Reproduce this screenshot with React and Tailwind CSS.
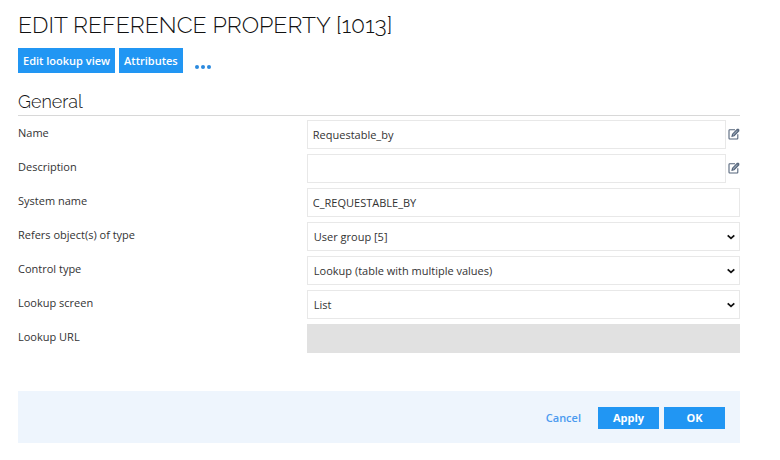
import React, { useState } from 'react';

const fields = [
    { id: 'name', label: 'Name', type: 'text', value: 'Requestable_by', translatable: true },
    { id: 'description', label: 'Description', type: 'text', value: '', translatable: true },
    { id: 'system_name', label: 'System name', type: 'text', value: 'C_REQUESTABLE_BY' },
    { id: 'object_type', label: 'Refers object(s) of type', type: 'select', value: 'User group [5]' },
    { id: 'control_type', label: 'Control type', type: 'select', value: 'Lookup (table with multiple values)' },
    { id: 'lookup_screen', label: 'Lookup screen', type: 'select', value: 'List' },
    { id: 'lookup_url', label: 'Lookup URL', type: 'text', value: '', disabled: true }
];

const EditIcon = () => (
    <svg className="w-3 h-3" viewBox="0 0 12 12" fill="none" stroke="#55657b">
        <path d="M7 1.7H1.7Q1 1.7 1 2.4V10.3Q1 11 1.7 11H9.1Q9.8 11 9.8 10.3V6.2" strokeWidth="1.1" />
        <path d="M4 8.3L4.5 6.2L9.2 1.4L10.7 2.9L6.1 7.7Z" fill="#9aa6b5" strokeWidth="1.1" />
        <path d="M9.6 0.9L11.2 2.5" strokeWidth="1.4" />
    </svg>
);

const Field = ({ field }) => {
    const [value, setValue] = useState(field.value);

    return (
        <div className="flex items-start">
            <label htmlFor={field.id} className="w-2/5 shrink-0 pt-[5px] leading-4">{field.label}</label>
            <div className="flex flex-1 items-center gap-0.5">
                {field.type === 'select' ? (
                    <div className="relative flex-1">
                        <select
                            id={field.id}
                            value={value}
                            onChange={e => setValue(e.target.value)}
                            className="block w-full h-[29px] appearance-none border border-[#e8e8e8] bg-white pl-1.5 pr-6 pt-px outline-none focus:border-[#2196f3]"
                        >
                            <option>{field.value}</option>
                        </select>
                        <svg className="pointer-events-none absolute right-1 top-2.5 w-2.5 h-2.5" viewBox="0 0 10 10" fill="none" stroke="#111" strokeWidth="1.8">
                            <path d="M1.7 3.4L5 6.4L8.3 3.4" />
                        </svg>
                    </div>
                ) : (
                    <input
                        id={field.id}
                        type="text"
                        value={value}
                        disabled={field.disabled}
                        onChange={e => setValue(e.target.value)}
                        className="block min-w-0 flex-1 h-[29px] border border-[#e8e8e8] bg-white px-[5px] outline-none focus:border-[#2196f3] disabled:border-[#e1e1e1] disabled:bg-[#e1e1e1]"
                    />
                )}
                {field.translatable && (
                    <button type="button" aria-label={`Edit ${field.label}`} className="pb-0.5">
                        <EditIcon />
                    </button>
                )}
            </div>
        </div>
    );
};

const App = () => {
    return (
        <div className="min-h-screen bg-white pl-[18px] pr-10 pt-[13px] font-['Open_Sans',sans-serif] text-[11px] text-[#333]">
            <h1 className="font-['Raleway','Lato',sans-serif] text-[23px] leading-6 font-light text-[#111]">
                EDIT REFERENCE PROPERTY [1013]
            </h1>

            <div className="mt-[11px] flex gap-1">
                <button type="button" className="h-[25px] bg-[#2196f3] hover:bg-[#1e88e5] px-[5px] pt-px font-semibold text-white">Edit lookup view</button>
                <button type="button" className="h-[25px] bg-[#2196f3] hover:bg-[#1e88e5] px-[5px] pt-px font-semibold text-white">Attributes</button>
                <button type="button" aria-label="More actions" className="ml-2 flex items-end pb-1">
                    <svg className="w-4 h-1" viewBox="0 0 16 4" fill="#2b8ade">
                        <circle cx="2" cy="2" r="2" />
                        <circle cx="8" cy="2" r="2" />
                        <circle cx="14" cy="2" r="2" />
                    </svg>
                </button>
            </div>

            <form onSubmit={e => e.preventDefault()}>
                <h2 className="mt-[18px] mb-1 border-b border-[#d8d8d8] pb-0.5 font-['Raleway','Lato',sans-serif] text-[18px] leading-[22px] font-light text-[#111]">
                    General
                </h2>
                <div className="flex flex-col gap-[5px]">
                    {fields.map((field) => (
                        <Field key={field.id} field={field} />
                    ))}
                </div>

                <div className="mt-[38px] flex items-center justify-end gap-[5px] bg-[#eef5fd] px-[15px] pt-4 pb-3.5">
                    <button type="button" className="mr-3 font-semibold text-[#4a9af0] hover:underline">Cancel</button>
                    <button type="button" className="h-[22px] w-[61px] bg-[#2196f3] hover:bg-[#1e88e5] font-bold text-white">Apply</button>
                    <button type="submit" className="h-[22px] w-[61px] bg-[#2196f3] hover:bg-[#1e88e5] font-bold text-white">OK</button>
                </div>
            </form>
        </div>
    );
};

export default App;
